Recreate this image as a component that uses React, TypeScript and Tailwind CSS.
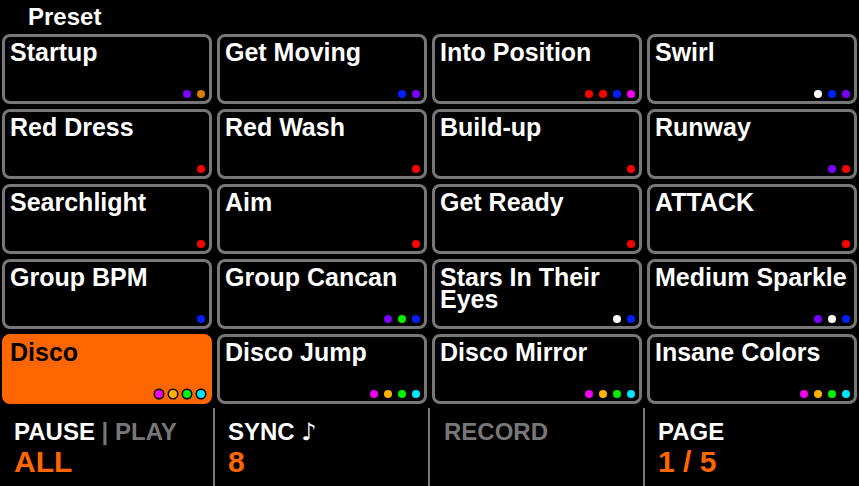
const PURPLE = '#7a00ff';
const AMBER = '#d98000';
const BLUE = '#0020ff';
const RED = '#ff0000';
const MAGENTA = '#f200f2';
const WHITE = '#ffffff';
const YELLOW = '#ffb300';
const GREEN = '#00f000';
const CYAN = '#00e5ff';

const DISCO = [MAGENTA, YELLOW, GREEN, CYAN];

type Preset = { name: string; dots: string[]; active?: boolean };

const presets: Preset[] = [
  { name: 'Startup', dots: [PURPLE, AMBER] },
  { name: 'Get Moving', dots: [BLUE, PURPLE] },
  { name: 'Into Position', dots: [RED, RED, BLUE, MAGENTA] },
  { name: 'Swirl', dots: [WHITE, BLUE, PURPLE] },
  { name: 'Red Dress', dots: [RED] },
  { name: 'Red Wash', dots: [RED] },
  { name: 'Build-up', dots: [RED] },
  { name: 'Runway', dots: [PURPLE, RED] },
  { name: 'Searchlight', dots: [RED] },
  { name: 'Aim', dots: [RED] },
  { name: 'Get Ready', dots: [RED] },
  { name: 'ATTACK', dots: [RED] },
  { name: 'Group BPM', dots: [BLUE] },
  { name: 'Group Cancan', dots: [PURPLE, GREEN, BLUE] },
  { name: 'Stars In Their Eyes', dots: [WHITE, BLUE] },
  { name: 'Medium Sparkle', dots: [PURPLE, WHITE, BLUE] },
  { name: 'Disco', dots: DISCO, active: true },
  { name: 'Disco Jump', dots: DISCO },
  { name: 'Disco Mirror', dots: DISCO },
  { name: 'Insane Colors', dots: DISCO },
];

function Tile({ preset }: { preset: Preset }) {
  const active = preset.active;
  return (
    <div
      className={
        active
          ? 'h-[70px] flex flex-col justify-between rounded-[8px] border-[3px] border-[#ff6600] bg-[#ff6600] pt-[4px] pl-[5px] pr-[4px] pb-[3px]'
          : 'h-[70px] flex flex-col justify-between rounded-[8px] border-[3px] border-[#777777] bg-black pt-[4px] pl-[5px] pr-[4px] pb-[3px]'
      }
    >
      <div className={active ? 'text-[25px] leading-[22px] font-bold text-black' : 'text-[25px] leading-[22px] font-bold text-white'}>
        {preset.name}
      </div>
      <div className="flex justify-end gap-[6px]">
        {preset.dots.map((c, i) => (
          <span
            key={i}
            className={active ? 'w-[8px] h-[8px] rounded-full ring-[1.5px] ring-black' : 'w-[8px] h-[8px] rounded-full'}
            style={{ backgroundColor: c }}
          />
        ))}
      </div>
    </div>
  );
}

export default function App() {
  return (
    <div
      className="w-[859px] h-[486px] bg-black overflow-hidden flex flex-col"
      style={{ fontFamily: '"Liberation Sans", Arial, sans-serif' }}
    >
      <div className="h-[34px] pt-[5px] pl-[28px] text-[24px] leading-[24px] font-bold text-white">Preset</div>

      <div className="grid grid-cols-4 gap-[5px] px-[2px]">
        {presets.map((p) => (
          <Tile key={p.name} preset={p} />
        ))}
      </div>

      <div className="flex-1 grid grid-cols-[213px_215px_215px_1fr] font-bold">
        <div className="mt-[4px] pt-[12px] pl-[14px]">
          <div className="text-[24px] leading-[24px] text-white">
            PAUSE <span className="text-[#777777]">| PLAY</span>
          </div>
          <div className="mt-[3px] text-[30px] leading-[30px] text-[#ff6600]">ALL</div>
        </div>
        <div className="mt-[4px] pt-[12px] pl-[13px] border-l-2 border-[#777777]">
          <div className="text-[24px] leading-[24px] text-white">
            SYNC{' '}
            <span style={{ fontFamily: '"DejaVu Sans", sans-serif' }} className="font-normal">
              ♪
            </span>
          </div>
          <div className="mt-[3px] text-[30px] leading-[30px] text-[#ff6600]">8</div>
        </div>
        <div className="mt-[4px] pt-[12px] pl-[14px] border-l-2 border-[#777777]">
          <div className="text-[24px] leading-[24px] text-[#777777]">RECORD</div>
        </div>
        <div className="mt-[4px] pt-[12px] pl-[13px] border-l-2 border-[#777777]">
          <div className="text-[24px] leading-[24px] text-white">PAGE</div>
          <div className="mt-[3px] text-[30px] leading-[30px] text-[#ff6600]">1 / 5</div>
        </div>
      </div>
    </div>
  );
}
